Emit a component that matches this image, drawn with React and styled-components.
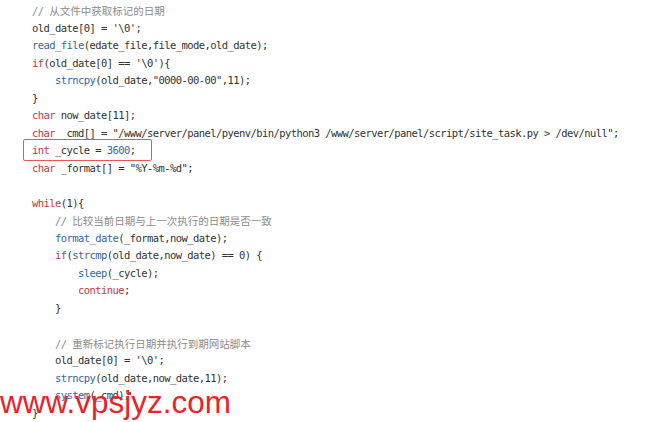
import React from "react";
import styled, { createGlobalStyle } from "styled-components";

const GlobalStyle = createGlobalStyle`
  html, body {
    margin: 0;
    padding: 0;
    background: #fff;
  }
`;

const Page = styled.div`
  position: relative;
  width: 650px;
  height: 422px;
  overflow: hidden;
  background: #fff;
`;

const Code = styled.div`
  padding: 2px 0 0 32px;
  font-family: "DejaVu Sans Mono", "Liberation Mono", monospace;
  font-size: 10.5px;
  letter-spacing: -0.57px;
  line-height: 17.5px;
  color: #333;
  white-space: pre;
`;

const Line = styled.div`
  height: 17.5px;
  padding-left: ${(p) => p.indent * 23}px;
`;

const colors = {
  kw: "#c8354d",
  fn: "#3567a6",
  num: "#3567a6",
  txt: "#333333",
  cm: "#8c8c8c",
};

const Tok = styled.span`
  color: ${(p) => colors[p.kind]};
`;

const Cjk = styled.span`
  font-family: "Noto Sans CJK SC", sans-serif;
  font-size: 10.5px;
  letter-spacing: 0;
  color: #8c8c8c;
`;

const Highlight = styled.span`
  padding: 4.4px 15px 4.4px 8px;
  margin: 0 -15px 0 -9px;
  border: 1px solid #e05a5a;
  border-radius: 2px;
`;

const Watermark = styled.div`
  position: absolute;
  left: 0;
  top: 387px;
  font-family: "Liberation Sans", Arial, sans-serif;
  font-size: 31.5px;
  line-height: 1;
  letter-spacing: 0;
  color: #e6252a;
`;

const Dot = styled.span`
  position: absolute;
  left: 128px;
  top: 392px;
  width: 3px;
  height: 3px;
  background: #e6252a;
`;

const c = (text) => ["cm", text];
const L = [
  [0, [c("// 从文件中获取标记的日期")]],
  [0, [["txt", "old_date[0] = '\\0';"]]],
  [0, [["fn", "read_file"], ["txt", "(edate_file,file_mode,old_date);"]]],
  [0, [["kw", "if"], ["txt", "(old_date[0] == '\\0'){"]]],
  [1, [["fn", "strncpy"], ["txt", "(old_date,\"0000-00-00\",11);"]]],
  [0, [["txt", "}"]]],
  [0, [["kw", "char"], ["txt", " now_date[11];"]]],
  [0, [["kw", "char"], ["txt", " _cmd[] = \"/www/server/panel/pyenv/bin/python3 /www/server/panel/script/site_task.py > /dev/null\";"]]],
  [0, "highlight"],
  [0, [["kw", "char"], ["txt", " _format[] = \"%Y-%m-%d\";"]]],
  [0, []],
  [0, [["kw", "while"], ["txt", "(1){"]]],
  [1, [c("// 比较当前日期与上一次执行的日期是否一致")]],
  [1, [["fn", "format_date"], ["txt", "(_format,now_date);"]]],
  [1, [["kw", "if"], ["txt", "("], ["fn", "strcmp"], ["txt", "(old_date,now_date) == 0) {"]]],
  [2, [["fn", "sleep"], ["txt", "(_cycle);"]]],
  [2, [["kw", "continue"], ["txt", ";"]]],
  [1, [["txt", "}"]]],
  [0, []],
  [1, [c("// 重新标记执行日期并执行到期网站脚本")]],
  [1, [["txt", "old_date[0] = '\\0';"]]],
  [1, [["fn", "strncpy"], ["txt", "(old_date,now_date,11);"]]],
  [1, [["fn", "system"], ["txt", "(_cmd);"]]],
  [0, [["txt", "}"]]],
];

const renderTok = ([kind, text], i) => {
  if (kind === "cm") {
    return (
      <Tok kind="cm" key={i}>
        {"// "}
        <Cjk>{text.slice(3)}</Cjk>
      </Tok>
    );
  }
  return (
    <Tok kind={kind} key={i}>
      {text}
    </Tok>
  );
};

export default function App() {
  return (
    <Page>
      <GlobalStyle />
      <Code>
        {L.map(([indent, toks], i) => (
          <Line indent={indent} key={i}>
            {toks === "highlight" ? (
              <Highlight>
                <Tok kind="kw">int</Tok>
                <Tok kind="txt"> _cycle = </Tok>
                <Tok kind="num">3600</Tok>
                <Tok kind="txt">;</Tok>
              </Highlight>
            ) : toks.length ? (
              toks.map(renderTok)
            ) : (
              " "
            )}
          </Line>
        ))}
      </Code>
      <Dot />
      <Watermark>www.vpsjyz.com</Watermark>
    </Page>
  );
}
